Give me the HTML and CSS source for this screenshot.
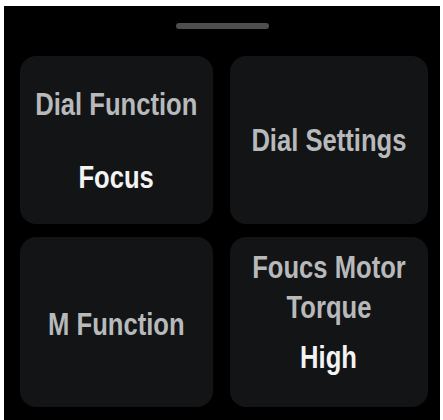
FILE: index.html
```html
<!DOCTYPE html>
<html>
<head>
<meta charset="utf-8">
<link rel="stylesheet" href="styles.css">
</head>
<body>
<div class="screen">
  <div class="handle"></div>
  <div class="grid">
    <div class="card card-focus">
      <div class="label">Dial Function</div>
      <div class="value">Focus</div>
    </div>
    <div class="card">
      <div class="label">Dial Settings</div>
    </div>
    <div class="card card-m">
      <div class="label">M Function</div>
    </div>
    <div class="card card-torque">
      <div class="label">Foucs Motor<br>Torque</div>
      <div class="value">High</div>
    </div>
  </div>
</div>
</body>
</html>
```

FILE: styles.css
```css
html, body {
  margin: 0;
  padding: 0;
  background: #ffffff;
}

.screen {
  margin: 6px 3px 0 4px;
  height: 414px;
  background: #000000;
  padding-top: 17px;
  box-sizing: border-box;
  display: flex;
  flex-direction: column;
  font-family: "Liberation Sans", Arial, sans-serif;
  font-weight: 700;
  font-size: 32px;
  line-height: 40px;
}

.handle {
  width: 93px;
  height: 6px;
  border-radius: 3px;
  background: #4d4d4f;
  margin: 0 auto;
}

.grid {
  margin: 27px 12px 0 16px;
  display: grid;
  grid-template-columns: 193px 198px;
  grid-template-rows: 168px 170px;
  column-gap: 17px;
  row-gap: 13px;
}

.card {
  background: #131416;
  border-radius: 16px;
  display: flex;
  flex-direction: column;
  align-items: center;
  justify-content: center;
  text-align: center;
  overflow: hidden;
}

.label,
.value {
  white-space: nowrap;
  transform: scaleX(0.8);
}

.label {
  color: #b7b9bb;
}

.value {
  color: #f3f3f3;
}

.card-focus .value {
  margin-top: 33px;
}

.card-m {
  padding-top: 4px;
}

.card-torque {
  padding-bottom: 20px;
}

.card-torque .value {
  margin-top: 10px;
}
```
